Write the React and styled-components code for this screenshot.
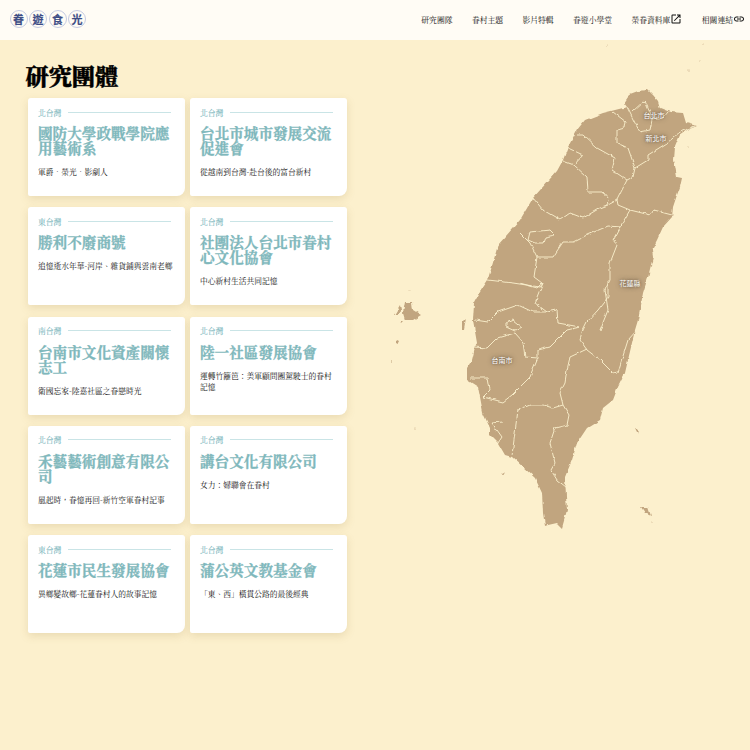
import React from "react";
import styled, { createGlobalStyle } from "styled-components";
import { MdOpenInNew, MdLink } from "react-icons/md";

const teams = [
  { area: "北台灣", name: "國防大學政戰學院應用藝術系", topic: "軍爵．榮光．影劇人" },
  { area: "北台灣", name: "台北市城市發展交流促進會", topic: "從越南到台灣-赴台後的富台新村" },
  { area: "東台灣", name: "勝利不廢商號", topic: "追憶逝水年華-河岸、雜貨鋪與雲南老鄉" },
  { area: "北台灣", name: "社團法人台北市眷村心文化協會", topic: "中心新村生活共同記憶" },
  { area: "南台灣", name: "台南市文化資產關懷志工", topic: "衛國忘家-陸嘉社區之眷戀時光" },
  { area: "北台灣", name: "陸一社區發展協會", topic: "運轉竹籬笆：美軍顧問團駕駛士的眷村記憶" },
  { area: "北台灣", name: "禾藝藝術創意有限公司", topic: "風起時，眷憶再回-新竹空軍眷村記事" },
  { area: "北台灣", name: "講台文化有限公司", topic: "女力：婦聯會在眷村" },
  { area: "東台灣", name: "花蓮市民生發展協會", topic: "異鄉變故鄉-花蓮眷村人的故事記憶" },
  { area: "北台灣", name: "蒲公英文教基金會", topic: "「東、西」橫貫公路的最後經典" },
];

const navItems = [
  { label: "研究團隊" },
  { label: "眷村主題" },
  { label: "影片特輯" },
  { label: "眷遊小學堂" },
  { label: "榮眷資料庫", icon: <MdOpenInNew size={12} /> },
  { label: "相關連結", icon: <MdLink size={12} /> },
];

const cities = [
  { name: "台北市", x: 654, y: 115 },
  { name: "新北市", x: 656, y: 138 },
  { name: "花蓮縣", x: 630, y: 283 },
  { name: "台南市", x: 502, y: 360 },
];

// map coordinates are page pixels, the viewBox starts at the map's corner
const island =
  "M624 103 630 94 638 91 648 90 653 95 658 101 660 108 670 112 683 113 686 123 697 126 687 130 680 135 675 147 674 160 677 177 682 178 680 187 677 195 673 207 672 217 663 227 657 240 652 250 653 257 648 277 643 293 640 310 638 320 635 330 628 360 625 373 618 387 613 400 603 408 600 420 587 428 577 443 572 460 565 477 566 497 567 510 562 528 557 523 548 525 545 526 543 513 542 493 535 478 523 467 512 457 505 455 498 443 490 435 490 428 483 413 480 397 478 387 467 380 467 368 472 360 475 348 477 343 473 320 474 303 480 292 488 280 498 245 520 220 533 198 557 171 563 160 568 147 577 130 585 120 603 113 627 107Z";

const borders = [
  "M627 107 635 123 640 132 650 130 652 120 663 118 668 112",
  "M632 112 645 100 650 112 652 120",
  "M613 112 626 122 625 128 617 130 617 143 628 148 635 168",
  "M577 135 583 135 597 148 615 158 612 170 627 180 633 177 635 168 648 160 648 155 667 143 680 132 695 126",
  "M568 148 583 155 574 165 587 177 588 192 603 192 609 199 608 205",
  "M563 161 574 165",
  "M533 198 543 210 560 220 570 213 583 218 600 208 608 205 617 200 627 180",
  "M617 200 618 205 630 210 650 215 653 210 672 215",
  "M630 210 620 227 608 226 587 235 573 242 563 242 553 257 537 257 530 243 520 233",
  "M620 227 613 240 617 245 610 263 610 280 605 290 608 310 600 330",
  "M537 257 534 277 542 283 537 288 520 283",
  "M488 280 513 283 540 287 543 283 535 303 547 312 557 310 558 323 580 327 583 330",
  "M608 280 608 297 598 310 587 322 583 330 580 340 587 350 600 360 613 373 618 372 628 340 637 330",
  "M475 320 488 322 498 312 518 305 533 312 547 312",
  "M475 347 487 348 497 338 515 333 523 342 525 357 538 358 538 350 550 347 567 330 580 327",
  "M538 358 530 377 512 395 503 402 483 397 490 390 488 378 470 378",
  "M587 349 570 357 567 370 565 383 560 393 563 405 553 408 543 405 530 405 518 410 512 455",
  "M563 405 569 415 567 425 555 428 550 443 555 463 551 470 557 480 566 487",
  "M502 422 492 423 502 437 498 443",
];

const lakes = [
  "M530 232 550 230 555 235 545 237 543 243 535 243 528 240Z",
  "M506 323 513 320 522 327 515 331 506 327Z",
];

const islets = [
  "M405 302 412 302 413 310 421 315 413 320 405 320 403 313Z",
  "M400 305 394 315 397 315 401 310Z",
  "M400 322 403 322 401 324Z",
  "M397 340 399 341 398 343 396 342Z",
  "M391 360 392 361 391 362Z",
  "M466 318 462 322 462 330 464 330Z",
  "M635 428 639 430 638 434Z",
  "M501 474 505 472 503 475Z",
  "M641 507 648 507 651 516 645 513Z",
];

const dots = [
  [409, 291], [415, 428], [652, 522], [688, 147], [607, 45], [703, 44], [688, 70], [700, 60],
];

const GlobalStyle = createGlobalStyle`
  html, body {
    margin: 0;
    padding: 0;
  }
  body {
    background: #fcf0cd;
    font-family: "Noto Serif CJK TC", "Noto Serif TC", "Liberation Serif", serif;
  }
`;

const Page = styled.div`
  width: 750px;
  height: 750px;
  overflow: hidden;
  position: relative;
`;

const Header = styled.header`
  height: 40px;
  background: #fffcf5;
  display: flex;
  align-items: center;
  justify-content: space-between;
  padding: 0 5px 0 9.5px;
`;

const Logo = styled.div`
  display: flex;
  gap: 1.5px;
  margin-top: -3px;
`;

const LogoChar = styled.span`
  width: 18px;
  height: 18px;
  box-sizing: border-box;
  border: 1px solid #c5cbe2;
  border-radius: 50%;
  display: flex;
  align-items: center;
  justify-content: center;
  font-family: "Noto Sans CJK TC", sans-serif;
  font-size: 11px;
  font-weight: 700;
  color: #3d4d85;
  -webkit-text-stroke: 0.2px #3d4d85;
`;

const Nav = styled.nav`
  display: flex;
  align-items: center;
  gap: 19.4px;
  margin-top: -2px;
`;

const NavItem = styled.a`
  display: flex;
  align-items: center;
  font-size: 7.8px;
  color: #111;
`;

const Main = styled.main`
  display: flex;
`;

const Content = styled.section`
  width: 375px;
  padding: 19px 0 0 25.5px;
  box-sizing: border-box;
`;

const Heading = styled.h1`
  margin: 0 0 7px;
  font-size: 23.2px;
  line-height: 32px;
  font-weight: 900;
  color: #000;
  -webkit-text-stroke: 0.4px #000;
`;

const Grid = styled.div`
  display: grid;
  grid-template-columns: 156.5px 156.5px;
  grid-auto-rows: 98px;
  column-gap: 5.5px;
  row-gap: 11.3px;
  margin-left: 2.5px;
`;

const Card = styled.article`
  background: #fff;
  border-radius: 3px 3px 8px 2px;
  box-shadow: 0 3px 8px rgba(150, 120, 60, 0.18);
  padding: 8.5px 10px 0;
`;

const CardTop = styled.div`
  display: flex;
  align-items: center;
  gap: 7px;
  padding-right: 4px;
  height: 11px;
`;

const Area = styled.span`
  font-size: 7.8px;
  color: #7ab6bc;
  -webkit-text-stroke: 0.1px #7ab6bc;
`;

const Rule = styled.span`
  flex: 1;
  height: 1px;
  background: #c9e4e6;
`;

const CardTitle = styled.h2`
  margin: 7.5px 0 0;
  font-size: 14.6px;
  line-height: 15px;
  font-weight: 700;
  color: #7fb8bc;
  -webkit-text-stroke: 0.3px #7fb8bc;
`;

const Topic = styled.p`
  margin: 11px 0 0;
  font-size: 7.75px;
  line-height: 11.5px;
  color: #111;
`;

const MapPane = styled.div`
  position: relative;
  flex: 1;
  height: 710px;
`;

const MapSvg = styled.svg`
  display: block;
`;

const CityLabel = styled.span`
  position: absolute;
  transform: translate(-50%, -50%);
  font-family: "Noto Sans CJK TC", sans-serif;
  font-size: 7px;
  color: #fff;
  white-space: nowrap;
  text-shadow: 0 0 5px rgba(60, 50, 40, 0.8), 0 0 2px rgba(60, 50, 40, 0.5);
`;

export default function App() {
  return (
    <Page>
      <GlobalStyle />
      <Header>
        <Logo>
          {"眷遊食光".split("").map((c) => (
            <LogoChar key={c}>{c}</LogoChar>
          ))}
        </Logo>
        <Nav>
          {navItems.map((item) => (
            <NavItem key={item.label}>
              {item.label}
              {item.icon}
            </NavItem>
          ))}
        </Nav>
      </Header>
      <Main>
        <Content>
          <Heading>研究團體</Heading>
          <Grid>
            {teams.map((t) => (
              <Card key={t.name}>
                <CardTop>
                  <Area>{t.area}</Area>
                  <Rule />
                </CardTop>
                <CardTitle>{t.name}</CardTitle>
                <Topic>{t.topic}</Topic>
              </Card>
            ))}
          </Grid>
        </Content>
        <MapPane>
          <MapSvg width="375" height="710" viewBox="375 40 375 710">
            <defs>
              {/* roughens the traced coast and county lines */}
              <filter id="rough" x="375" y="40" width="375" height="710" filterUnits="userSpaceOnUse">
                <feTurbulence type="fractalNoise" baseFrequency="0.14" numOctaves="2" seed="4" result="noise" />
                <feDisplacementMap in="SourceGraphic" in2="noise" scale="3.5" xChannelSelector="R" yChannelSelector="G" />
                <feGaussianBlur stdDeviation="0.25" />
              </filter>
            </defs>
            <g filter="url(#rough)">
              <path d={island} fill="#c1a57f" />
              {islets.map((d) => (
                <path key={d} d={d} fill="#c1a57f" />
              ))}
              {dots.map(([x, y]) => (
                <circle key={x + "-" + y} cx={x} cy={y} r="0.6" fill="#c1a57f" />
              ))}
              <g fill="none" stroke="#fbf0cd" strokeWidth="0.9" strokeLinejoin="round">
                {borders.map((d) => (
                  <path key={d} d={d} />
                ))}
                {lakes.map((d) => (
                  <path key={d} d={d} />
                ))}
              </g>
            </g>
          </MapSvg>
          {cities.map((c) => (
            <CityLabel key={c.name} style={{ left: c.x - 375, top: c.y - 40 }}>
              {c.name}
            </CityLabel>
          ))}
        </MapPane>
      </Main>
    </Page>
  );
}
